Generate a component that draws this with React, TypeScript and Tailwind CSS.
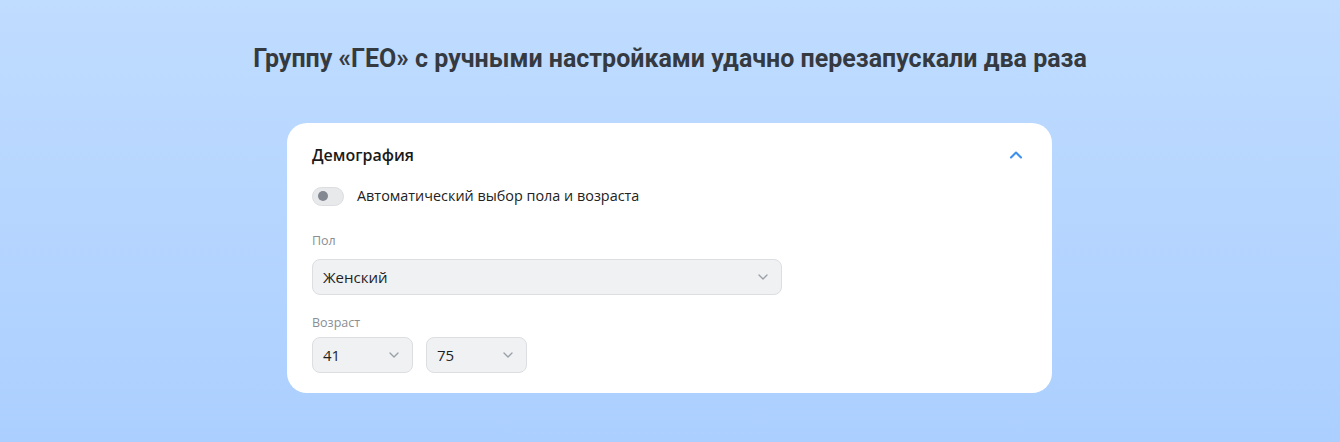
import { ChevronDown, ChevronUp } from 'lucide-react';

function Select({ value, className }: { value: string; className: string }) {
  return (
    <div
      className={`flex items-center justify-between h-[36px] rounded-[8px] border border-[#dcdee2] bg-[#f0f1f3] pl-[10px] pr-[10px] text-[15px] text-[#1f1f1f] ${className}`}
    >
      <span>{value}</span>
      <ChevronDown className="w-[16px] h-[16px] text-[#9aa0a8]" strokeWidth={2} />
    </div>
  );
}

export default function App() {
  return (
    <div className="w-[1340px] h-[442px] bg-gradient-to-b from-[#c0dcff] to-[#abcfff] flex flex-col items-center pt-[42px]">
      <h1 className="font-['Roboto',sans-serif] font-bold text-[25px] leading-[34px] text-[#353a40]">
        Группу «ГЕО» с ручными настройками удачно перезапускали два раза
      </h1>
      <div
        className="mt-[47px] mr-[1px] w-[765px] h-[270px] bg-white rounded-[20px] px-[25px] pt-[20px] font-['Open_Sans','Noto_Sans',sans-serif]"
      >
        <div className="flex items-center justify-between">
          <span className="text-[16px] font-semibold text-[#1a1a1a] leading-[24px]">Демография</span>
          <ChevronUp className="w-[20px] h-[20px] text-[#3d8ff0] mr-[1px]" strokeWidth={2.5} />
        </div>
        <div className="flex items-center mt-[19px]">
          <div className="w-[32px] h-[19px] rounded-full bg-[#e8e9eb] border border-[#dcdde0] flex items-center pl-[5px]">
            <div className="w-[10px] h-[10px] rounded-full bg-[#818892]" />
          </div>
          <span className="ml-[13px] text-[14.4px] text-[#222] leading-[20px]">Автоматический выбор пола и возраста</span>
        </div>
        <div className="mt-[27px] text-[12.5px] text-[#8a8e94] leading-[16px]">Пол</div>
        <Select value="Женский" className="mt-[10px] w-[470px]" />
        <div className="mt-[20px] text-[12.5px] text-[#8a8e94] leading-[16px]">Возраст</div>
        <div className="flex gap-[13px] mt-[6px]">
          <Select value="41" className="w-[101px]" />
          <Select value="75" className="w-[101px]" />
        </div>
      </div>
    </div>
  );
}
